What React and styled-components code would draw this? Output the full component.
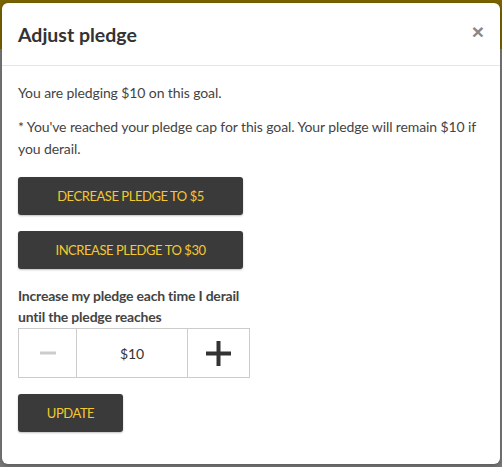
import React, { useState } from 'react';
import styled, { createGlobalStyle } from 'styled-components';

const GlobalStyle = createGlobalStyle`
  html, body {
    margin: 0;
    padding: 0;
  }
  body {
    font-family: Lato, "Noto Sans", sans-serif;
    background: #7b7b7b;
  }
`;

// Dimmed page behind the modal
const Backdrop = styled.div`
  position: relative;
  width: 502px;
  height: 467px;
  overflow: hidden;
  background: linear-gradient(#7a6400 0, #7a6400 49px, #7b7b7b 49px);
  padding: 3px 2px 0 2px;
  box-sizing: border-box;
`;

const Modal = styled.div`
  background: #fff;
  border-radius: 6px;
  height: 461px;
  box-shadow: 0 2px 6px rgba(0, 0, 0, 0.3);
  display: flex;
  flex-direction: column;
`;

const Header = styled.div`
  display: flex;
  align-items: center;
  justify-content: space-between;
  height: 63px;
  padding: 0 16px;
  border-bottom: 1px solid #e5e5e5;
  box-sizing: border-box;
`;

const Title = styled.h4`
  margin: 0;
  font-size: 19.5px;
  font-weight: 700;
  color: #333;
`;

const Close = styled.button`
  border: 0;
  background: none;
  padding: 0;
  font-family: "Liberation Sans", Arial, sans-serif;
  font-size: 21px;
  font-weight: 700;
  color: #888;
  line-height: 1;
  margin-top: -6px;
  margin-right: 0;
  cursor: pointer;
`;

const Body = styled.div`
  padding: 16px 16px;
  color: #444;
  font-size: 14px;
  letter-spacing: -0.1px;
`;

const Para = styled.p`
  margin: 0 0 12px 0;
  line-height: 22px;
`;

const Button = styled.button`
  display: block;
  background: #3a3a3a;
  color: #f5c82e;
  border: 0;
  border-radius: 3px;
  box-shadow: 0 1px 2px rgba(0, 0, 0, 0.25);
  height: 38px;
  width: ${p => p.$width || 'auto'};
  padding: 0;
  font-family: inherit;
  font-size: 13px;
  letter-spacing: -0.45px;
  text-transform: uppercase;
  margin-top: ${p => p.$top || '0'};
  cursor: pointer;
`;

const Label = styled.div`
  font-weight: 700;
  color: #444;
  line-height: 21px;
  letter-spacing: -0.2px;
  margin-top: 16px;
`;

const Stepper = styled.div`
  display: flex;
  width: 232px;
  height: 50px;
  margin-top: 1px;
  border: 1px solid #ccc;
  box-sizing: border-box;
`;

const Cell = styled.div`
  width: ${p => p.$w}px;
  display: flex;
  align-items: center;
  justify-content: center;
  border-left: ${p => (p.$first ? '0' : '1px solid #ccc')};
  color: #333;
  font-size: 14px;
`;

const Sign = ({ color, plus, size, thick }) => (
  <svg width={size} height={size} viewBox={`0 0 ${size} ${size}`}>
    <rect x="0" y={(size - thick) / 2} width={size} height={thick} fill={color} />
    {plus && <rect x={(size - thick) / 2} y="0" width={thick} height={size} fill={color} />}
  </svg>
);

export default function App() {
  const [value] = useState(10);
  return (
    <>
      <GlobalStyle />
      <Backdrop>
        <Modal>
          <Header>
            <Title>Adjust pledge</Title>
            <Close>×</Close>
          </Header>
          <Body>
            <Para>You are pledging $10 on this goal.</Para>
            <Para>
              * You've reached your pledge cap for this goal. Your pledge will remain $10 if you derail.
            </Para>
            <Button $width="225px" $top="17px">Decrease pledge to $5</Button>
            <Button $width="225px" $top="16px">Increase pledge to $30</Button>
            <Label>
              Increase my pledge each time I derail
              <br />
              until the pledge reaches
            </Label>
            <Stepper>
              <Cell $w={58} $first>
                <Sign color="#ccc" size={16} thick={3} />
              </Cell>
              <Cell $w={112}>${value}</Cell>
              <Cell $w={62}>
                <Sign color="#333" plus size={25} thick={4} />
              </Cell>
            </Stepper>
            <Button $width="105px" $top="16px">Update</Button>
          </Body>
        </Modal>
      </Backdrop>
    </>
  );
}
